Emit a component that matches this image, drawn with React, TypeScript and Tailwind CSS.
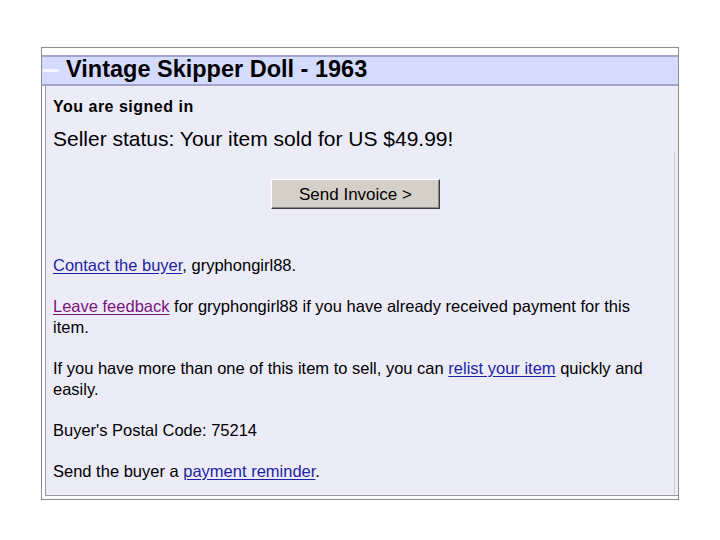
import React from 'react';

const styles = {
  para: `mt-5 text-[16.5px] leading-[21px] text-black`,
  link: `text-[#1f1fa3] underline underline-offset-2`,
  visited: `text-[#7d137d] underline underline-offset-2`,
};

export default function App() {
  return (
    <div className="w-[720px] h-[540px] bg-white font-['Liberation_Sans',Arial,sans-serif] pt-[47px] pl-[41px]">
      <div className="w-[638px] h-[453px] border border-[#8c8c8c] bg-white pt-[7px] flex flex-col">
        {/* Header bar */}
        <div className="border-t-2 border-b-2 border-[#a2a2cf] bg-[#d5dbfc] h-[31px] flex items-center">
          <div className="ml-[1px] w-[16px] h-[3px] bg-[#f4f5ff]" />
          <h1 className="ml-[7px] text-[23.5px] leading-[23px] font-bold text-black -mt-[3px]">
            Vintage Skipper Doll - 1963
          </h1>
        </div>

        {/* Content */}
        <div className="ml-[3px] mb-[3px] flex-1 bg-[#ececf8] border-l border-b border-[#9a9a9a] pt-[11px]">
          <div className="pl-[7px]">
            <p className="text-[16px] leading-[20px] font-bold tracking-[0.5px] text-black">You are signed in</p>
            <p className="mt-[9px] text-[21px] leading-[26px] text-black">
              Seller status: Your item sold for US $49.99!
            </p>
          </div>

          <div className="mr-[3px] border-r border-[#c9c9d9] pl-[7px] pt-[27px] pb-[12px]">
            <div className="w-[605px]">
              <div className="flex justify-center">
                <button className="w-[169px] h-[30px] bg-[#d4d0c8] border border-t-white border-l-white border-r-[#3c3c3c] border-b-[#3c3c3c] shadow-[inset_-1px_-1px_0_#8a8a8a] text-[17px] text-black leading-none">
                  Send Invoice &gt;
                </button>
              </div>

              <p className={`${styles.para} mt-[46px]`}>
                <a className={styles.link}>Contact the buyer</a>, gryphongirl88.
              </p>
              <p className={styles.para}>
                <a className={styles.visited}>Leave feedback</a> for gryphongirl88 if you have already received payment for this item.
              </p>
              <p className={styles.para}>
                If you have more than one of this item to sell, you can <a className={styles.link}>relist your item</a> quickly and easily.
              </p>
              <p className={styles.para}>Buyer's Postal Code: 75214</p>
              <p className={styles.para}>
                Send the buyer a <a className={styles.link}>payment reminder</a>.
              </p>
            </div>
          </div>
        </div>
      </div>
    </div>
  );
}
